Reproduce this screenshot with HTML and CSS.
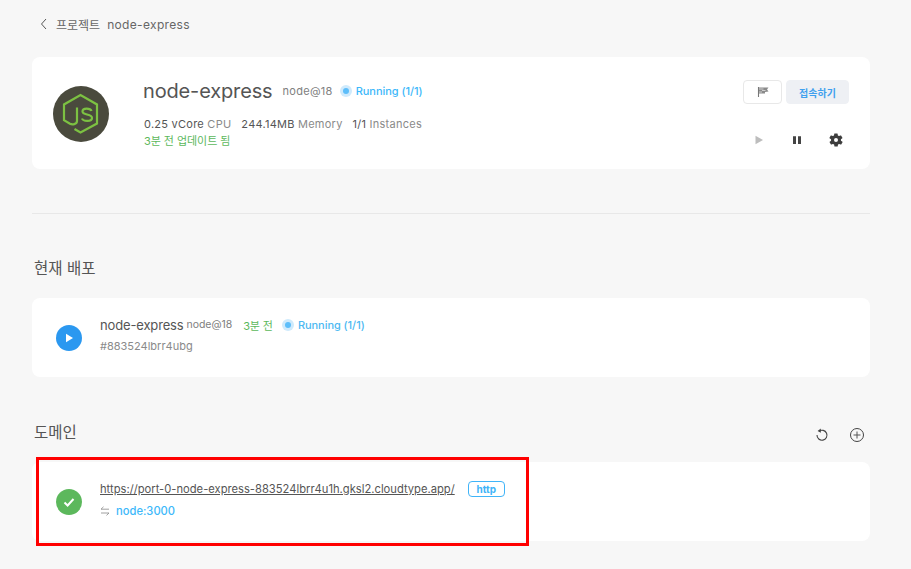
FILE: index.html
```html
<!DOCTYPE html>
<html lang="ko">
<head>
<meta charset="utf-8">
<title>node-express</title>
<link rel="stylesheet" href="styles.css">
</head>
<body>
<main class="page">
  <nav class="crumb">
    <svg class="crumb-back" width="8" height="12" viewBox="0 0 8 12"><path d="M6 1 1.500 6 6 11" fill="none" stroke="#555" stroke-width="1"/></svg>
    <span>프로젝트</span><span class="crumb-name">node-express</span>
  </nav>

  <section class="card card-head">
    <div class="logo">
      <svg width="56" height="56" viewBox="0 0 56 56">
        <circle cx="28" cy="28" r="28" fill="#4a4a3d"/>
        <path d="M24 21.500V35c0 3.500-5 3.800-7 2.700l-6-3.500V18.500l16.500-9.500L44 18.500v19L27.500 46.500l-6-3.500" fill="none" stroke="#7cc142" stroke-width="2.200"/>
        <path d="M38.500 25c-1-3-9-3.500-9 .5 0 4 9.500 2 9.500 6.500 0 4-9 3.500-10 .5" fill="none" stroke="#7cc142" stroke-width="2.200"/>
      </svg>
    </div>
    <div class="head-info">
      <div class="head-title">
        <h1>node-express</h1>
        <span class="stack">node@18</span>
        <span class="status"><i class="dot"></i>Running (1/1)</span>
      </div>
      <div class="metrics">
        <span><b>0.25 vCore</b> CPU</span>
        <span><b>244.14MB</b> Memory</span>
        <span><b>1/1</b> Instances</span>
      </div>
      <div class="updated">3분 전 업데이트 됨</div>
    </div>
    <div class="head-actions">
      <div class="btn-row">
        <button class="btn btn-flag" type="button">
          <svg width="12" height="12" viewBox="0 0 12 12"><path d="M1.500 1v10" stroke="#777" stroke-width="1.100"/><path d="M2 1.500h9.500L10 3.500l1.500 2L8 6v1.500H2z" fill="#8a8a8a"/><path d="M2 3h4.500M5 4.500h3.500M2 6h3" stroke="#fff" stroke-width=".6"/></svg>
        </button>
        <button class="btn btn-connect" type="button">접속하기</button>
      </div>
      <div class="icon-row">
        <svg width="12" height="12" viewBox="0 0 12 12"><path d="M1.500 1.800v8.400L9 6z" fill="#bdbdbd"/></svg>
        <svg width="12" height="12" viewBox="0 0 12 12"><path d="M2 2.200h3v7.800H2zM7 2.200h3v7.800H7z" fill="#444"/></svg>
        <svg width="16" height="16" viewBox="0 0 24 24"><path fill="#3d3d3d" d="M19.400 13a7.500 7.500 0 0 0 0-2l2.100-1.600a.5.5 0 0 0 .1-.6l-2-3.500a.5.5 0 0 0-.6-.2l-2.500 1a7.300 7.300 0 0 0-1.700-1l-.4-2.600a.5.5 0 0 0-.5-.4h-4a.5.5 0 0 0-.5.400l-.4 2.600a7.300 7.300 0 0 0-1.700 1l-2.500-1a.5.5 0 0 0-.6.2l-2 3.500a.5.5 0 0 0 .1.600L4.600 11a7.500 7.500 0 0 0 0 2l-2.100 1.600a.5.5 0 0 0-.1.600l2 3.500a.5.5 0 0 0 .6.200l2.500-1a7.300 7.300 0 0 0 1.700 1l.4 2.600a.5.5 0 0 0 .5.400h4a.5.5 0 0 0 .5-.4l.4-2.600a7.300 7.300 0 0 0 1.700-1l2.500 1a.5.5 0 0 0 .6-.2l2-3.500a.5.500 0 0 0-.1-.6zM12 15a3 3 0 1 1 0-6 3 3 0 0 1 0 6z"/></svg>
      </div>
    </div>
  </section>

  <hr class="divider">

  <h2 class="section-title section-deploy">현재 배포</h2>
  <section class="card card-row">
    <span class="round round-blue"><svg width="10" height="10" viewBox="0 0 10 10"><path d="M2 .8v8.400L9 5z" fill="#fff"/></svg></span>
    <div class="row-body">
      <div class="row-main">
        <span class="row-name">node-express</span>
        <span class="row-stack">node@18</span>
        <span class="row-time">3분 전</span>
        <span class="status status-sm"><i class="dot"></i>Running (1/1)</span>
      </div>
      <div class="row-sub">#883524lbrr4ubg</div>
    </div>
  </section>

  <div class="section-head">
    <h2 class="section-title">도메인</h2>
    <div class="section-tools">
      <svg width="14" height="14" viewBox="0 0 14 14"><path d="M4 3.200A5 5 0 1 1 2 7" fill="none" stroke="#444" stroke-width="1.100"/><path d="M5.800 .6v4.200L2.600 3z" fill="#444"/></svg>
      <svg width="16" height="16" viewBox="0 0 16 16"><circle cx="8" cy="8" r="6.500" fill="none" stroke="#444" stroke-width="1"/><path d="M8 4.500v7M4.500 8h7" stroke="#555" stroke-width="1"/></svg>
    </div>
  </div>
  <section class="card card-row">
    <span class="round round-green"><svg width="14" height="14" viewBox="0 0 14 14"><path d="M2.500 7.500 5.600 10.500 11.500 4" fill="none" stroke="#fff" stroke-width="2"/></svg></span>
    <div class="row-body row-body-domain">
      <div class="row-main">
        <a class="row-link" href="#">https://port-0-node-express-883524lbrr4u1h.gksl2.cloudtype.app/</a>
        <span class="tag">http</span>
      </div>
      <div class="row-target">
        <svg width="10" height="10" viewBox="0 0 10 10"><path d="M9 3.200H1M3.500.8 1 3.200M1 7h8M6.500 9.400 9 7" fill="none" stroke="#888" stroke-width=".8"/></svg>
        <span>node:3000</span>
      </div>
    </div>
    <div class="highlight"></div>
  </section>
</main>
</body>
</html>
```
FILE: styles.css
```css
* { box-sizing: border-box; }
html, body { margin: 0; height: 100%; overflow: hidden; }
body {
  background: #f7f7f7;
  color: #555;
  font-family: Inter, "Noto Sans CJK KR", sans-serif;
}
.page { padding: 0 41px 0 32px; }
.crumb {
  display: flex;
  align-items: center;
  gap: 7px;
  height: 57px;
  padding: 0 0 9px 8px;
  font-size: 12px;
  color: #666;
}
.crumb-back { margin-right: 1px; }
.crumb-name { letter-spacing: .33px; }
.card {
  position: relative;
  background: #fff;
  border-radius: 8px;
  display: flex;
}
.card-head { height: 112px; padding: 29px 21px 0 21px; }
.logo { width: 56px; height: 56px; margin-right: 34px; }
.logo svg { display: block; }
.head-info { flex: 1; }
.head-title { display: flex; align-items: center; height: 10px; }
h1 { margin: 0 10px 0 0; font-size: 20px; font-weight: 400; color: #555; letter-spacing: -.15px; }
.stack { font-size: 11px; color: #808080; margin-right: 7px; letter-spacing: .3px; }
.status { display: inline-flex; align-items: center; font-size: 11px; font-weight: 500; letter-spacing: -.05px; color: #3db8fa; }
.status-sm { color: #4db9f2; }
.dot {
  width: 12px; height: 12px; border-radius: 50%;
  background: #cfeafc;
  margin-right: 4px;
  position: relative;
  display: inline-block;
}
.dot::after {
  content: "";
  position: absolute;
  inset: 3px;
  border-radius: 50%;
  background: #5dbefa;
}
.metrics { display: flex; gap: 10px; margin: 21px 0 0 1px; font-size: 11px; color: #8a8a8a; line-height: 14px; letter-spacing: .25px; }
.metrics b { font-weight: 400; color: #555; }
.updated { font-size: 11px; color: #5cb85c; line-height: 14px; margin: 3px 0 0 1px; letter-spacing: -.05px; }
.head-actions { display: flex; flex-direction: column; align-items: flex-end; margin-top: -6px; }
.btn-row { display: flex; gap: 4px; }
.btn {
  width: 39px; height: 24px; padding: 0;
  border-radius: 4px;
  font-family: inherit;
  display: flex; align-items: center; justify-content: center;
}
.btn-flag { background: #fff; border: 1px solid #e8e8e8; }
.btn-connect { width: 63px; background: #eef0f4; border: 1px solid #eef0f4; color: #3fa0ee; font-size: 10px; font-weight: 700; }
.icon-row { display: flex; align-items: center; gap: 25px; margin-top: 29px; height: 14px; padding-right: 5.500px; }
.divider { border: 0; border-top: 1px solid #e8e8e8; margin: 44px 0 0; }
.section-title { margin: 0; font-size: 15.500px; font-weight: 400; color: #555; padding-left: 2px; line-height: 20px; }
.section-deploy { margin-top: 45px; margin-bottom: 19px; }
.card-row { height: 79px; padding: 0 0 0 24px; align-items: center; }
.round {
  width: 26px; height: 26px; border-radius: 50%;
  display: flex; align-items: center; justify-content: center;
  margin-right: 18px; flex: none;
}
.round-blue { background: #2b98f0; }
.round-green { background: #5cb85c; }
.row-body { display: flex; flex-direction: column; margin-top: -5px; }
.row-body-domain { margin-top: -3px; }
.row-main { display: flex; align-items: center; height: 18px; }
.row-name { font-size: 13px; color: #555; margin-right: 3px; letter-spacing: -.15px; }
.row-stack { font-size: 10.500px; color: #808080; margin-right: 11px; letter-spacing: -.05px; }
.row-time { font-size: 11px; color: #5cb85c; margin-right: 9px; letter-spacing: -.1px; }
.row-sub { font-size: 11px; color: #8a8a8a; margin-top: 3px; line-height: 18px; }
.section-head { display: flex; align-items: center; justify-content: space-between; margin-top: 46px; margin-bottom: 19px; height: 20px; }
.section-tools { display: flex; align-items: center; gap: 20px; padding-right: 5px; position: relative; top: 2px; }
.section-tools svg { display: block; }
.row-link { font-size: 11.200px; color: #555; text-decoration: underline; margin-right: 13px; }
.tag {
  border: 1px solid #40b4f8; border-radius: 4px;
  font-size: 10px; font-weight: 700; color: #40b4f8;
  height: 16px; width: 37px; line-height: 14px; text-align: center;
}
.row-target { display: flex; align-items: center; gap: 6px; margin-top: 4px; height: 18px; font-size: 11.200px; font-weight: 500; color: #3db8fa; }
.highlight {
  position: absolute;
  left: 4px; top: -5px;
  width: 493px; height: 89px;
  border: 3px solid #f00;
  pointer-events: none;
}
```
